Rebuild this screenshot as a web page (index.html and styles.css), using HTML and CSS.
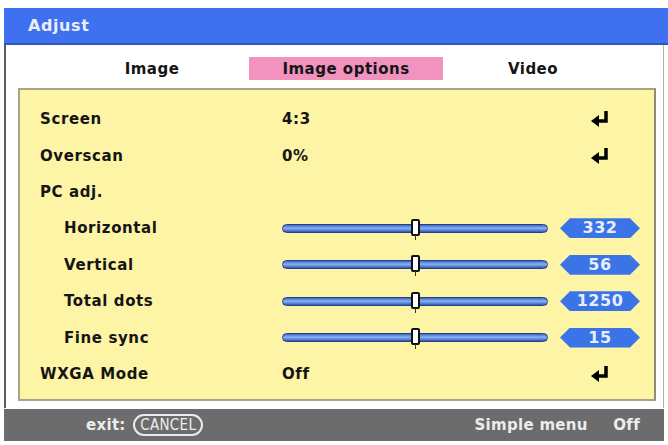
FILE: index.html
```html
<!DOCTYPE html>
<html lang="en">
<head>
  <meta charset="UTF-8">
  <title>Adjust</title>
  <link rel="stylesheet" href="styles.css">
</head>
<body>

  <div class="window">
    <div class="titlebar">Adjust</div>

    <div class="main">
      <div class="tabs">
        <div class="tab">Image</div>
        <div class="tab active">Image options</div>
        <div class="tab">Video</div>
      </div>

      <div class="panel">
        <div class="row">
          <div class="label">Screen</div>
          <div class="value">4:3</div>
          <div class="action">
            <svg class="enter" viewBox="0 0 20 18"><path d="M16 1 V11 H8" /><polygon points="1,11 9,5 9,17" /></svg>
          </div>
        </div>
        <div class="row">
          <div class="label">Overscan</div>
          <div class="value">0%</div>
          <div class="action">
            <svg class="enter" viewBox="0 0 20 18"><path d="M16 1 V11 H8" /><polygon points="1,11 9,5 9,17" /></svg>
          </div>
        </div>
        <div class="row">
          <div class="label">PC adj.</div>
        </div>
        <div class="row">
          <div class="label sub">Horizontal</div>
          <div class="slider"><div class="track"><span class="thumb"></span></div></div>
          <div class="action"><span class="badge">332</span></div>
        </div>
        <div class="row">
          <div class="label sub">Vertical</div>
          <div class="slider"><div class="track"><span class="thumb"></span></div></div>
          <div class="action"><span class="badge">56</span></div>
        </div>
        <div class="row">
          <div class="label sub">Total dots</div>
          <div class="slider"><div class="track"><span class="thumb"></span></div></div>
          <div class="action"><span class="badge">1250</span></div>
        </div>
        <div class="row">
          <div class="label sub">Fine sync</div>
          <div class="slider"><div class="track"><span class="thumb"></span></div></div>
          <div class="action"><span class="badge">15</span></div>
        </div>
        <div class="row">
          <div class="label">WXGA Mode</div>
          <div class="value">Off</div>
          <div class="action">
            <svg class="enter" viewBox="0 0 20 18"><path d="M16 1 V11 H8" /><polygon points="1,11 9,5 9,17" /></svg>
          </div>
        </div>
      </div>
    </div>

    <div class="footer">
      <div class="exit">exit: <span class="key">CANCEL</span></div>
      <div class="simple">Simple menu <span class="state">Off</span></div>
    </div>
  </div>

</body>
</html>
```

FILE: styles.css
```css
* {
  margin: 0;
  padding: 0;
  box-sizing: border-box;
}

body {
  background: #ffffff;
  font-family: 'DejaVu Sans', sans-serif;
  font-weight: bold;
  color: #151515;
}

.window {
  width: 660px;
  margin: 8px 0 0 4px;
}

.titlebar {
  width: 664px;
  height: 37px;
  padding: 8px 0 0 24px;
  background: #3f70f0;
  border-bottom: 2px solid #3057b8;
  color: #e8eefc;
  font-size: 16px;
  letter-spacing: 0.6px;
}

.main {
  background: #ffffff;
  border-left: 2px solid #5c5c5c;
  border-right: 1px solid #b0b0b0;
  padding: 0 7px 7px 12px;
}

.tabs {
  display: grid;
  grid-template-columns: 194px 194px 180px;
  padding: 12px 0 8px 37px;
}

.tab {
  height: 23px;
  line-height: 24px;
  text-align: center;
  font-size: 15px;
  letter-spacing: 0.5px;
}

.tab.active {
  background: #f292bf;
}

.panel {
  background: #fdf4a6;
  border: 2px solid #a8a48c;
  border-right-color: #8e8b78;
  padding: 11px 0 7px 20px;
}

.row {
  display: grid;
  grid-template-columns: 242px 266px 92px;
  align-items: center;
  height: 36.4px;
  font-size: 15px;
  letter-spacing: 0.6px;
}

.label.sub {
  padding-left: 24px;
}

.action {
  display: flex;
  justify-content: flex-end;
  align-items: center;
}

.enter {
  width: 20px;
  height: 18px;
  margin-right: 30px;
}

.enter path {
  fill: none;
  stroke: #000000;
  stroke-width: 3.5;
}

.enter polygon {
  fill: #000000;
}

.slider {
  display: flex;
  align-items: center;
}

.track {
  position: relative;
  width: 266px;
  height: 9px;
  border-radius: 5px;
  border: 1px solid #23408c;
  background: linear-gradient(#3c66c4 0%, #8db0ee 45%, #5f8ee2 70%, #2e56b0 100%);
}

.thumb {
  position: absolute;
  left: 128px;
  top: -6px;
  width: 9px;
  height: 17px;
  background: #ffffff;
  border: 2px solid #111111;
  border-radius: 2px;
}

.thumb::after {
  content: '';
  position: absolute;
  left: 2px;
  top: 14px;
  width: 1px;
  height: 5px;
  background: #333333;
}

.badge {
  display: block;
  width: 80px;
  height: 20px;
  line-height: 20px;
  text-align: center;
  background: #3b74e6;
  color: #e8eefc;
  font-size: 16px;
  letter-spacing: 0.5px;
  clip-path: polygon(0 50%, 10px 0, calc(100% - 10px) 0, 100% 50%, calc(100% - 10px) 100%, 10px 100%);
}

.footer {
  display: flex;
  justify-content: space-between;
  align-items: center;
  height: 32px;
  margin-top: 1px;
  background: #6c6c6c;
  color: #ececec;
  font-size: 15px;
  padding: 0 24px 0 82px;
  letter-spacing: 0.3px;
}

.key {
  display: inline-block;
  margin-left: 2px;
  padding: 0 5px;
  border: 2px solid #ececec;
  border-radius: 11px;
  font-family: 'Liberation Sans Narrow', 'DejaVu Sans Condensed', sans-serif;
  font-weight: normal;
  font-size: 15px;
  line-height: 18px;
}

.state {
  margin-left: 20px;
}
```
